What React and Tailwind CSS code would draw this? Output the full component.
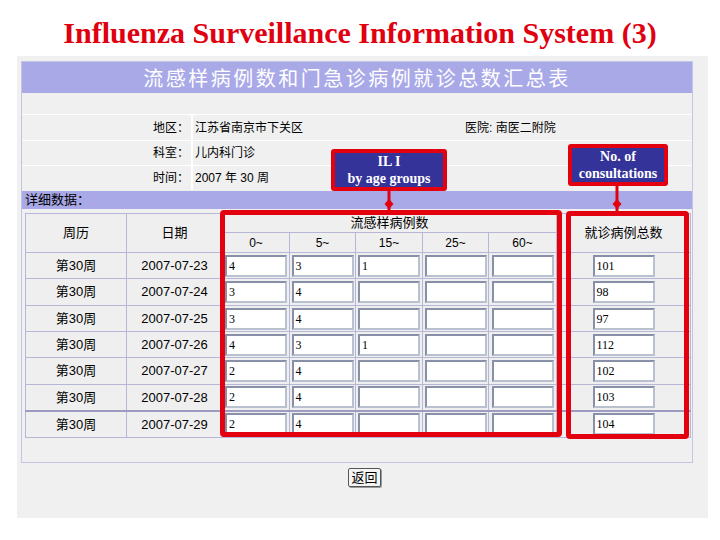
import React from 'react';

const rows = [
  { week: '第30周', date: '2007-07-23', ages: ['4', '3', '1', '', ''], total: '101' },
  { week: '第30周', date: '2007-07-24', ages: ['3', '4', '', '', ''], total: '98' },
  { week: '第30周', date: '2007-07-25', ages: ['3', '4', '', '', ''], total: '97' },
  { week: '第30周', date: '2007-07-26', ages: ['4', '3', '1', '', ''], total: '112' },
  { week: '第30周', date: '2007-07-27', ages: ['2', '4', '', '', ''], total: '102' },
  { week: '第30周', date: '2007-07-28', ages: ['2', '4', '', '', ''], total: '103' },
  { week: '第30周', date: '2007-07-29', ages: ['2', '4', '', '', ''], total: '104' },
];

const ageGroups = ['0~', '5~', '15~', '25~', '60~'];
const rowHeights = ['h-[26px]', 'h-[27px]', 'h-[26px]', 'h-[26px]', 'h-[27px]', 'h-[26px]', 'h-[27px]'];

function Box({ value }) {
  return (
    <div className="mx-auto w-[62px] h-[22px] bg-white border-2 border-t-[#8790a6] border-l-[#8790a6] border-r-[#b9c0cf] border-b-[#b9c0cf] pl-[2px] text-left text-[12px] leading-[18px] text-black font-['Liberation_Serif',serif]">
      {value}
    </div>
  );
}

function Arrow({ left, top, height }) {
  return (
    <svg className="absolute" style={{ left: left - 6, top }} width="12" height={height} viewBox={`0 0 12 ${height}`}>
      <line x1="6" y1="0" x2="6" y2={height} stroke="#e3000f" strokeWidth="3" />
      <path d={`M6 ${height - 12} L10.5 ${height - 7} L6 ${height - 2} L1.5 ${height - 7} Z`} fill="#e3000f" />
    </svg>
  );
}

export default function App() {
  const cell = 'border border-[#b6b6d6] bg-[#efefef] text-center';
  return (
    <div className="relative w-[720px] h-[540px] bg-white overflow-hidden font-['Liberation_Sans','Noto_Sans_CJK_SC',sans-serif]">
      <div className="h-[56px] pt-[10px] flex items-center justify-center">
        <span className="text-[30px] leading-none font-bold text-[#e00010] font-['Liberation_Serif',serif]">
          Influenza Surveillance Information System (3)
        </span>
      </div>

      <div className="ml-[17px] w-[691px] h-[462px] bg-[#f0f0f0] pt-[5px] pl-[4px]">
        <div className="w-[672px] h-[402px] border border-[#c4c4e4] flex flex-col">
          <div className="h-[31px] bg-[#a9a9e8] flex items-center justify-center text-white text-[20px] tracking-[2.5px] font-['Noto_Sans_CJK_SC',sans-serif]">
            流感样病例数和门急诊病例就诊总数汇总表
          </div>
          <div className="h-[22px] border-b border-white" />
          <div className="grid grid-cols-[171px_272px_1fr] text-[12px] text-black">
            <div className="h-[26px] border-b border-r-2 border-white flex items-center justify-end pr-[2px]">地区：</div>
            <div className="h-[26px] border-b border-white flex items-center pl-[2px]">江苏省南京市下关区</div>
            <div className="h-[26px] border-b border-white flex items-center">医院: 南医二附院</div>
            <div className="h-[25px] border-b border-r-2 border-white flex items-center justify-end pr-[2px]">科室：</div>
            <div className="h-[25px] border-b border-white flex items-center pl-[2px]">儿内科门诊</div>
            <div className="h-[25px] border-b border-white" />
            <div className="h-[24px] border-r-2 border-white flex items-center justify-end pr-[2px]">时间：</div>
            <div className="h-[24px] flex items-center pl-[2px]">2007 年 30 周</div>
            <div className="h-[24px]" />
          </div>
          <div className="mt-[1px] h-[18px] bg-[#a9a9e8] flex items-center pl-[3px] text-[13px] text-black">详细数据：</div>

          <table className="mt-[4px] ml-[3px] w-[665px] table-fixed border-collapse text-[13px] text-black">
            <colgroup>
              <col className="w-[101px]" />
              <col className="w-[96px]" />
              <col className="w-[67px]" />
              <col className="w-[66px]" />
              <col className="w-[67px]" />
              <col className="w-[66px]" />
              <col className="w-[68px]" />
              <col className="w-[134px]" />
            </colgroup>
            <thead>
              <tr className="h-[19px]">
                <th rowSpan={2} className={`${cell} font-normal`}>周历</th>
                <th rowSpan={2} className={`${cell} font-normal`}>日期</th>
                <th colSpan={5} className={`${cell} font-normal leading-[16px]`}>流感样病例数</th>
                <th rowSpan={2} className={`${cell} font-normal`}>就诊病例总数</th>
              </tr>
              <tr className="h-[20px]">
                {ageGroups.map((a) => (
                  <th key={a} className={`${cell} font-normal text-[12px] leading-[16px]`}>{a}</th>
                ))}
              </tr>
            </thead>
            <tbody>
              {rows.map((r, i) => (
                <tr key={r.date} className={`${rowHeights[i]} ${i === rows.length - 1 ? 'border-t-2 border-[#9c9cc0]' : ''}`}>
                  <td className={cell}>{r.week}</td>
                  <td className={cell}>{r.date}</td>
                  {r.ages.map((v, j) => (
                    <td key={j} className={`${cell} px-[1px]`}><Box value={v} /></td>
                  ))}
                  <td className={cell}><Box value={r.total} /></td>
                </tr>
              ))}
            </tbody>
          </table>
        </div>
        <div className="flex justify-center mt-[5px]">
          <button className="h-[19px] px-[2px] bg-[#f4f4f4] border border-[#555] rounded-[2px] shadow-[1px_1px_0_#999] text-[13px] leading-[16px] text-black">
            返回
          </button>
        </div>
      </div>

      {/* annotations */}
      <div className="absolute left-[220px] top-[210px] w-[342px] h-[227px] border-[5px] border-[#e3000f] rounded-[4px]" />
      <div className="absolute left-[566px] top-[211px] w-[123px] h-[228px] border-[5px] border-[#e3000f] rounded-[4px]" />

      <Arrow left={389} top={190} height={21} />
      <Arrow left={617} top={185} height={26} />

      <div className="absolute left-[331px] top-[149px] w-[116px] h-[42px] bg-[#333399] border-[4px] border-[#e3000f] rounded-[3px] flex flex-col items-center justify-center text-white font-bold text-[14px] leading-[17px] font-['Liberation_Serif',serif]">
        <span>IL I</span>
        <span>by age groups</span>
      </div>
      <div className="absolute left-[568px] top-[144px] w-[100px] h-[42px] bg-[#333399] border-[4px] border-[#e3000f] rounded-[3px] flex flex-col items-center justify-center text-white font-bold text-[14px] leading-[17px] font-['Liberation_Serif',serif]">
        <span>No. of</span>
        <span>consultations</span>
      </div>
    </div>
  );
}
